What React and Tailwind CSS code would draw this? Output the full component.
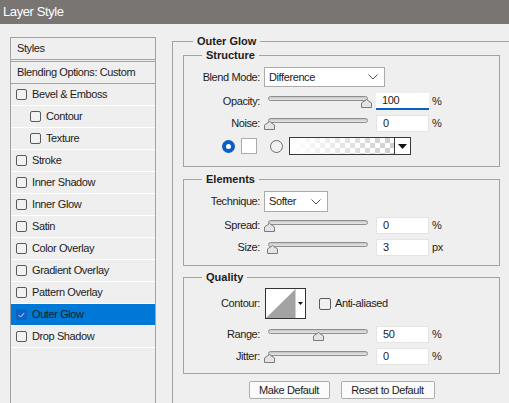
const FONT = "font-['Liberation_Sans',Arial,sans-serif]";

const styleRows = [
  { label: 'Bevel & Emboss' },
  { label: 'Contour', indent: true },
  { label: 'Texture', indent: true },
  { label: 'Stroke' },
  { label: 'Inner Shadow' },
  { label: 'Inner Glow' },
  { label: 'Satin' },
  { label: 'Color Overlay' },
  { label: 'Gradient Overlay' },
  { label: 'Pattern Overlay' },
  { label: 'Outer Glow', checked: true },
  { label: 'Drop Shadow' },
];

const Check = ({ checked }) =>
  checked ? (
    <span className="flex h-[11px] w-[11px] items-center justify-center rounded-[2px] border border-[#1a5fb4] bg-[#0a63c9]">
      <svg width="7" height="6" viewBox="0 0 7 6" fill="none" stroke="#cfe3ff" strokeWidth="1">
        <polyline points="0.8 3.2 2.6 5 6.2 1" />
      </svg>
    </span>
  ) : (
    <span className="h-[11px] w-[11px] rounded-[2px] border border-[#5a5a5a] bg-[#f2f2f2]" />
  );

const Chevron = () => (
  <svg width="10" height="6" viewBox="0 0 10 6" fill="none" stroke="#555" strokeWidth="1">
    <polyline points="0.5 0.5 5 5 9.5 0.5" />
  </svg>
);

const Thumb = () => (
  <svg width="11" height="9" viewBox="0 0 11 9">
    <polygon points="5.5 0.5 10.5 4 10.5 8.5 0.5 8.5 0.5 4" fill="#e4e4e4" stroke="#7a7a7a" />
  </svg>
);

function Slider({ value }) {
  return (
    <div className="relative h-[17px] w-[108px]">
      <div className="mx-[4px] mt-[3px] h-[5px] rounded-full border border-[#8e8e8e] bg-[linear-gradient(#c4c4c4,#e8e8e8)]" />
      <div className="absolute top-[6px]" style={{ left: Math.round((value / 100) * 97) }}>
        <Thumb />
      </div>
    </div>
  );
}

function Field({ value, focused }) {
  return (
    <div
      className={`ml-[4px] flex h-[17px] w-[53px] items-center bg-white pl-[6px] ${
        focused ? 'border-b-2 border-[#0a60c2]' : 'border border-[#e4e4e4]'
      }`}
    >
      {value}
    </div>
  );
}

function Label({ children }) {
  return <div className="w-[80px] shrink-0 pr-[4px] text-right">{children}</div>;
}

function SliderRow({ label, value, unit, focused, className = '' }) {
  return (
    <div className={`flex h-[17px] items-center ${className}`}>
      <Label>{label}</Label>
      <Slider value={value} />
      <Field value={value} focused={focused} />
      <span className="ml-[3px]">{unit}</span>
    </div>
  );
}

function Group({ title, className = '', children }) {
  return (
    <fieldset className={`mr-[9px] border border-[#a3a3a3] ${className}`}>
      <legend className="ml-[18px] px-[4px] font-bold leading-[14px] tracking-normal">{title}</legend>
      {children}
    </fieldset>
  );
}

function GradientSwatch() {
  return (
    <div className="ml-[6px] flex h-[18px] w-[122px] border border-[#3a3a3a] bg-white">
      <div className="flex-1 bg-[linear-gradient(to_right,#fff,rgba(255,255,255,0)),repeating-conic-gradient(#cdcdcd_0_25%,#fff_0_50%)] [background-size:auto,10px_10px]" />
      <div className="flex w-[16px] items-center justify-center border-l border-[#3a3a3a]">
        <svg width="9" height="5" viewBox="0 0 9 5">
          <polygon points="0 0 9 0 4.5 5" fill="#111" />
        </svg>
      </div>
    </div>
  );
}

function ContourBox() {
  return (
    <svg width="41" height="31" viewBox="0 0 41 31" className="ml-[1px]">
      <rect x="0.5" y="0.5" width="40" height="30" fill="#fff" stroke="#333" />
      <polygon points="1 30 30 1.5 30 30" fill="#a3a3a3" />
      <line x1="30.5" y1="1" x2="30.5" y2="30" stroke="#d0d0d0" />
      <polygon points="33 14 38 14 35.5 17" fill="#111" />
    </svg>
  );
}

export default function App() {
  return (
    <div className={`h-[403px] w-[509px] overflow-hidden bg-[#efefef] text-[11px] tracking-[-0.4px] text-[#1c1c1c] ${FONT}`}>
      <div className="flex h-[24px] items-center bg-[#787573] pl-[3px] text-[13px] text-white">Layer Style</div>

      <div className="flex">
        <div className="ml-[10px] mt-[13px] h-[366px] w-[146px] border border-b-0 border-[#a3a3a3]">
          <div className="flex h-[24px] items-center border-b-[3px] border-double border-[#a3a3a3] pl-[6px]">Styles</div>
          <div className="flex h-[22px] items-center border-b border-[#a3a3a3] pl-[6px]">Blending Options: Custom</div>
          {styleRows.map((r) => (
            <div
              key={r.label}
              className={`flex h-[22px] items-center gap-[5px] border-b border-white ${
                r.indent ? 'pl-[19px]' : 'pl-[5px]'
              } ${r.checked ? 'bg-[#0078d7]' : ''}`}
            >
              <Check checked={r.checked} />
              <span>{r.label}</span>
            </div>
          ))}
        </div>

        <fieldset className="ml-[16px] mt-[10px] flex-1 border-l border-t border-[#a3a3a3]">
          <legend className="ml-[20px] px-[4px] font-bold leading-[14px] tracking-normal">Outer Glow</legend>

          <div className="pl-[10px]">
            <Group title="Structure">
              <div className="mt-[5px] flex h-[20px] items-center">
                <Label>Blend Mode:</Label>
                <div className="flex h-[20px] w-[121px] items-center justify-between border border-[#ababab] bg-white pl-[4px] pr-[6px]">
                  <span>Difference</span>
                  <Chevron />
                </div>
              </div>
              <SliderRow className="mt-[6px]" label="Opacity:" value={100} unit="%" focused />
              <SliderRow className="mt-[5px]" label="Noise:" value={0} unit="%" />
              <div className="mb-[11px] mt-[5px] flex h-[18px] items-center pl-[38px]">
                <span className="flex h-[13px] w-[13px] items-center justify-center rounded-full bg-[#0a5fbf]">
                  <span className="h-[5px] w-[5px] rounded-full bg-white" />
                </span>
                <span className="ml-[6px] h-[16px] w-[16px] border border-[#acacac] bg-white" />
                <span className="ml-[13px] h-[13px] w-[13px] rounded-full border border-[#6b6b6b] bg-[#f2f2f2]" />
                <GradientSwatch />
              </div>
            </Group>

            <Group title="Elements" className="mt-[5px]">
              <div className="mt-[5px] flex h-[21px] items-center">
                <Label>Technique:</Label>
                <div className="flex h-[21px] w-[64px] items-center justify-between border border-[#ababab] bg-white pl-[4px] pr-[6px]">
                  <span>Softer</span>
                  <Chevron />
                </div>
              </div>
              <SliderRow className="mt-[5px]" label="Spread:" value={0} unit="%" />
              <SliderRow className="mb-[9px] mt-[5px]" label="Size:" value={3} unit="px" />
            </Group>

            <Group title="Quality" className="mt-[4px]">
              <div className="mt-[4px] flex h-[31px] items-center">
                <Label>Contour:</Label>
                <ContourBox />
                <span className="ml-[13px] h-[12px] w-[12px] rounded-[2px] border border-[#5a5a5a] bg-[#f2f2f2]" />
                <span className="ml-[4px]">Anti-aliased</span>
              </div>
              <SliderRow className="mt-[7px]" label="Range:" value={50} unit="%" />
              <SliderRow className="mb-[8px] mt-[5px]" label="Jitter:" value={0} unit="%" />
            </Group>

            <div className="mr-[9px] mt-[7px] flex justify-center gap-[11px]">
              <button className="h-[18px] w-[81px] rounded-[2px] border border-[#adadad] bg-[#fbfbfb]">Make Default</button>
              <button className="h-[18px] w-[94px] rounded-[2px] border border-[#adadad] bg-[#fbfbfb]">Reset to Default</button>
            </div>
          </div>
        </fieldset>
      </div>
    </div>
  );
}
